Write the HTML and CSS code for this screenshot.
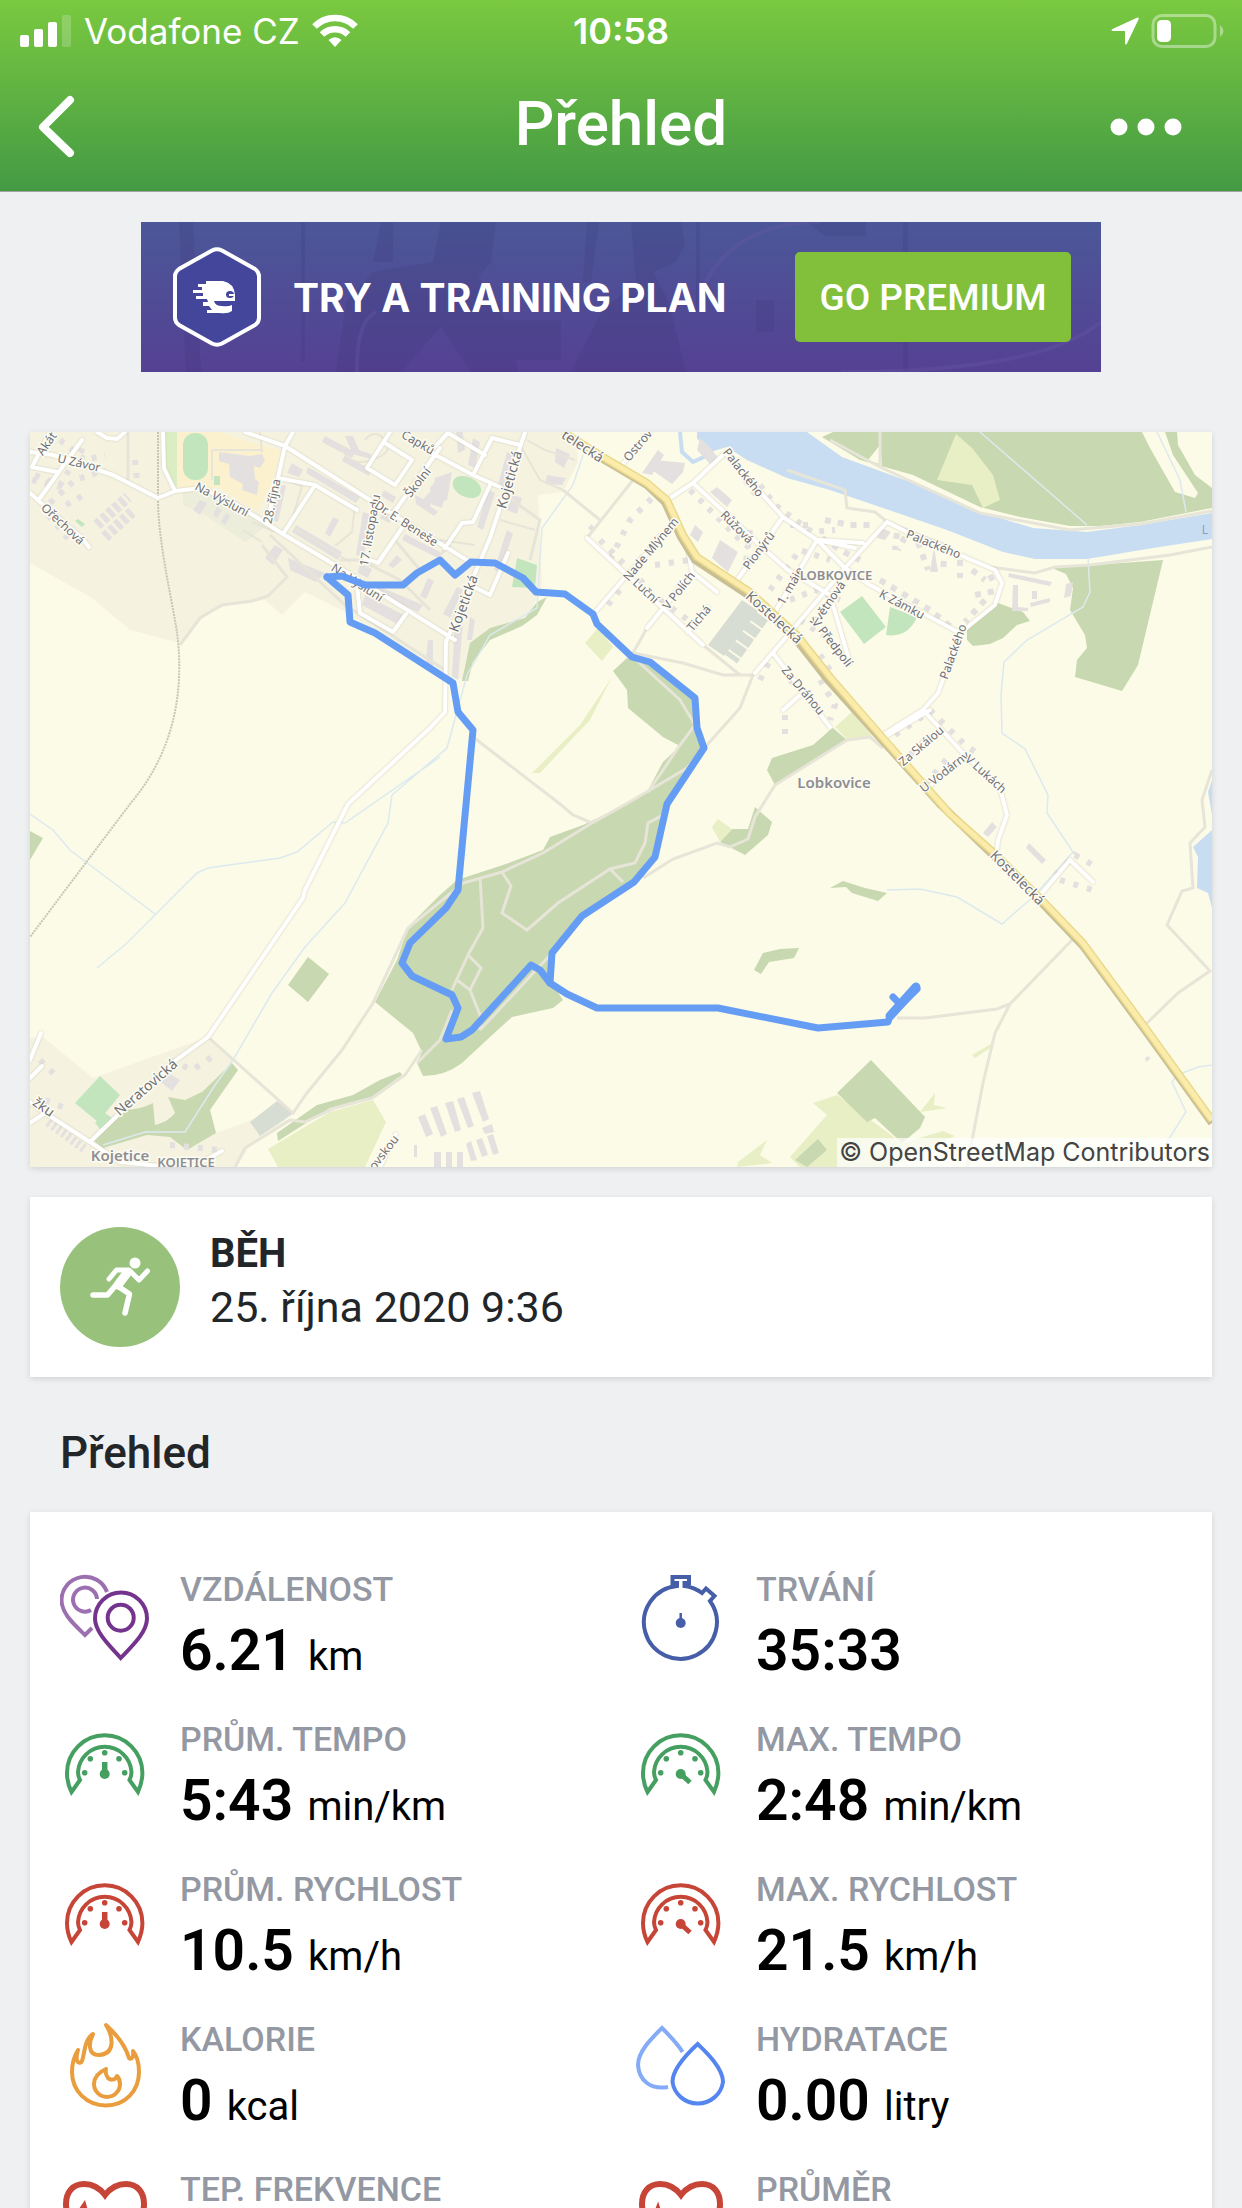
FILE: index.html
```
<!DOCTYPE html>
<html lang="cs">

<head>
    <meta charset="utf-8">
    <meta name="viewport" content="width=device-width, initial-scale=1">
    <title>Přehled</title>
    <link rel="stylesheet" href="styles.css">
</head>

<body>
    <!-- shared icons -->
    <svg class="sprite" width="0" height="0">
        <symbol id="gauge" viewBox="0 0 90 90">
            <path d="M11.5 70C8 63 7 57 7 51A37.7 37.7 0 0 1 82.4 51C82.4 57 81 63 78 70L69.5 58C71 55 71.5 53 71.5 50A26.8 26.8 0 0 0 18 50C18 54 18.5 55 20 58Z" fill="none" stroke="currentColor" stroke-width="4"/>
            <g fill="currentColor">
                <circle cx="24.7" cy="50.7" r="2.8"/><circle cx="30.3" cy="36.7" r="2.8"/><circle cx="44.7" cy="30.7" r="2.8"/>
                <circle cx="59" cy="36.7" r="2.8"/><circle cx="64.7" cy="50.7" r="2.8"/><circle cx="44.7" cy="52" r="5"/>
            </g>
        </symbol>
        <symbol id="heart" viewBox="0 0 90 90">
            <path d="M45 23C38 14 31 12 24 12C13 12 6 20 6 32C6 54 26 70 45 84C64 70 84 54 84 32C84 20 77 12 66 12C59 12 52 14 45 23Z" fill="none" stroke="currentColor" stroke-width="6"/>
        </symbol>
    </svg>

    <div class="app">
        <header class="header">
            <div class="status-bar">
                <div class="carrier">
                    <svg width="52" height="34" viewBox="0 0 52 34" fill="#fff">
                        <rect x="0" y="21" width="9" height="12" rx="2"/><rect x="14" y="15" width="9" height="18" rx="2"/>
                        <rect x="28" y="8" width="9" height="25" rx="2"/><rect x="42" y="1" width="9" height="32" rx="2" opacity=".2"/>
                    </svg>
                    <span>Vodafone CZ</span>
                    <svg width="46" height="34" viewBox="0 0 46 34" fill="none" stroke="#fff" stroke-width="6.5">
                        <path d="M2.500 12.500A29 29 0 0 1 43.500 12.500"/><path d="M10 20.500A18.500 18.500 0 0 1 36 20.500"/>
                        <path d="M23 33L16.500 26Q23 20.500 29.500 26Z" fill="#fff" stroke="none"/>
                    </svg>
                </div>
                <span class="clock">10:58</span>
                <div class="power">
                    <svg width="30" height="30" viewBox="0 0 30 30" fill="#fff"><path d="M27.500 1.500Q29.500 1 28.500 3.500L17 27.500Q15.500 30 15 27V15H3.500Q0 15 2.500 13Z"/></svg>
                    <svg width="76" height="36" viewBox="0 0 76 36">
                        <rect x="3" y="2.500" width="62" height="31" rx="9" fill="none" stroke="#fff" stroke-width="3" opacity=".4"/>
                        <rect x="7" y="7" width="14" height="22" rx="4.500" fill="#fff"/>
                        <path d="M70 12Q77 18 70 24Z" fill="#fff" opacity=".4"/>
                    </svg>
                </div>
            </div>
            <nav class="nav-bar">
                <button class="nav-button" type="button" aria-label="Zpět">
                    <svg width="42" height="66" viewBox="0 0 42 66"><path d="M34 6L7 33L34 59" fill="none" stroke="#fff" stroke-width="8" stroke-linecap="round" stroke-linejoin="round"/></svg>
                </button>
                <h1 class="title">Přehled</h1>
                <button class="nav-button more" type="button" aria-label="Více">
                    <svg width="72" height="18" viewBox="0 0 72 18" fill="#fff"><circle cx="9" cy="9" r="8.500"/><circle cx="36" cy="9" r="8.500"/><circle cx="63" cy="9" r="8.500"/></svg>
                </button>
            </nav>
        </header>

        <main class="content">
            <section class="banner">
                <svg class="banner-bg" viewBox="0 0 960 150" preserveAspectRatio="none">
                    <g fill="#37326f" opacity=".16">
                        <path d="M300 0H355L350 40L337 55L360 85L378 150H330L300 105L260 150H195L205 80L232 50L292 40Z"/>
                        <path d="M490 0H540L544 22L535 40L512 50L528 80L545 150H430L460 90L495 60Z"/>
                        <path d="M365 98h55v40h-55zM38 0h14l8 150H45zM665 0h60v14h-40zM615 78h18v32h-18zM160 0h4v140h-4zM240 0h12v40h-20zM446 0h12l-8 60h-8zM762 0h5v150h-5zM555 0h4v90h-4z"/>
                    </g>
                    <path d="M235 90Q215 100 216 150M560 70Q590 0 680 0M700 150Q900 150 960 100" fill="none" stroke="#6a5aa8" stroke-width="4" opacity=".3"/>
                </svg>
                <svg class="banner-logo" width="92" height="102" viewBox="0 0 92 102">
                    <path d="M41 4.500Q46 2 51 4.500L84 23Q88 26 88 30V72Q88 76 84 79L51 97.500Q46 100 41 97.500L8 79Q4 76 4 72V30Q4 26 8 23Z" fill="#43469a" stroke="#fff" stroke-width="4"/>
                    <path d="M32 35H52Q63 37 64 49V55H43Q44 60 51 60Q57 61 61 59V65Q57 68 49 67H36V64H41L38 60H32V56H37L36 53H25V50H32V47H22V44H31V41H27V38H35V35Z" fill="#fff"/>
                    <ellipse cx="59" cy="48.500" rx="4" ry="3.500" fill="#43469a"/><path d="M58 49h6" stroke="#fff" stroke-width="2"/>
                </svg>
                <span class="banner-text">TRY A TRAINING PLAN</span>
                <button class="premium" type="button">GO PREMIUM</button>
            </section>

            <section class="card map">
                <svg viewBox="30 432 1182 735" role="img" aria-label="Mapa trasy">
                    <g fill="#f5f3e0">
                        <path d="M30 432H563L577 445L578 462L563 492L538 495L542 585L527 622L490 628L470 645L468 680L450 678L433 665L345 612L305 592L282 615L265 600L223 605L202 618L180 643L130 630L92 598L30 563Z"/>
                        <path d="M30 1038L43 1037L93 1078L208 1037L233 1060L210 1110L216 1133L260 1117L293 1120L250 1145L237 1167H30Z"/>
                    </g>
                    <path d="M183 488L205 490L268 525L245 542L205 515L183 505Z" fill="#ecedda"/>
                    <path d="M177 432H220L237 438L280 450L273 482L257 512L220 488L177 487Z" fill="#fcf1ce"/>
                    <path d="M165 432H177V486H172L165 465Z" fill="#dbedc3"/>
                    <g fill="#c2e5be">
                        <rect x="183" y="433" width="25" height="47" rx="12"/><ellipse cx="467" cy="487" rx="15" ry="10" transform="rotate(25 467 487)"/>
                        <path d="M862 596L886 627L864 644L840 612ZM890 607L917 617Q908 638 886 635ZM517 558L537 565L535 588L512 587ZM100 1076L120 1095L98 1122L75 1103ZM105 1113L112 1118L100 1129L95 1123ZM214 476h6v9h-6zM78 519l7 5-3 3-7-6z"/>
                    </g>

                    <!-- forest and grass -->
                    <g fill="#c8d8b0">
                        <path d="M822 437L833 432H1212V508L1140 522L1100 526H1070L1020 517L980 507L913 475L860 460Z"/>
                        <path d="M1052 568L1163 560L1138 665L1122 691L1075 677L1077 660L1087 648L1085 635L1070 610L1073 588L1066 574Z"/>
                        <path d="M998 603L1023 612L1030 621L1017 625L1003 638L990 644L973 646L967 640V628Z"/>
                        <path d="M547 597L537 615L522 626L490 640L473 662L468 681H462L470 643L490 628L525 618L537 602Z"/>
                        <path d="M627 658L650 663L695 698L698 728L705 748L667 804L655 857L633 882L582 915L552 953L550 980L563 1000L553 1008L512 1017L490 1037L462 1063Q445 1076 423 1076L417 1063L422 1052L413 1033L375 1002L397 960L408 927L440 895L457 880L503 865L543 850L550 837L583 825L630 803L647 792L663 762L680 746L663 737L628 708L627 690L613 671Z"/>
                        <path d="M830 730L813 745L772 758L767 770L775 785L820 758L847 740L833 728ZM755 807L772 822L768 835L745 855L720 842L732 829H748ZM843 881L865 888L887 893L878 901L852 893L846 887L830 888ZM763 953L780 949L799 948L794 958L769 962L761 974L754 970ZM30 831L43 838L30 860ZM308 957L329 974L308 1002L288 985Z"/>
                        <path d="M232 1063L238 1070L210 1110L216 1133L187 1150L170 1137L147 1135L103 1148L93 1140L123 1110Q140 1110 153 1103L155 1125Q168 1122 175 1113L168 1097L185 1100L202 1092ZM277 1133L317 1105L353 1095L380 1080L400 1072L402 1075L370 1098L330 1108L278 1141Z"/>
                    </g>
                    <g fill="#e8efc5">
                        <path d="M956 434L972 448L993 475L1000 500L983 508L972 485L937 480ZM598 628L613 647L602 661L585 643ZM852 712L873 737L847 739L835 727ZM718 819L732 829L720 842L712 827ZM373 1100L386 1122L365 1167H278L268 1149L330 1112ZM813 1103L837 1095L902 1143L943 1131L955 1136L890 1167H800L790 1157L827 1115ZM767 1140L760 1155L772 1163L737 1167L738 1162ZM612 677L580 725L532 773H540L590 720ZM991 1044L972 1055L975 1058L990 1048ZM935 1093L920 1112L947 1108L934 1105Z"/>
                    </g>
                    <path d="M871 1060L925 1117L920 1128L902 1143L875 1118L867 1122L837 1093ZM818 1139L827 1150L807 1167L795 1160Z" fill="#c8d8b0"/>
                    <path d="M1142 432H1165L1173 455L1198 493L1195 498L1175 492L1150 448ZM1177 432L1178 445L1195 475L1212 488V432ZM880 445L868 460L882 465Z" fill="#fcfbe7"/>
                    <path d="M742 600L758 611L724 656L708 645ZM277 1101L294 1113L260 1136L250 1122Z" fill="#d7ddd3"/>
                    <path d="M762 616L731 659" fill="none" stroke="#d7ddd3" stroke-width="15" stroke-dasharray="10 2"/>

                    <!-- water -->
                    <path d="M697 432H807L842 457L913 483L980 512L1033 528L1087 532L1140 525L1212 513V539L1153 548L1087 559H1035L1003 552L947 530L883 508L830 490L787 478L747 460L727 447L707 453L697 438ZM1212 830L1193 847L1198 857L1197 888L1208 893L1212 908ZM1212 780L1208 792L1212 815Z" fill="#c8ddf2"/>
                    <path d="M680 432L682 452L693 462L706 456" fill="none" stroke="#c8ddf2" stroke-width="4"/>
                    <g fill="none" stroke="#dceaef" stroke-width="1.500">
                        <path d="M1088 558L1090 592L1083 607L1027 640L1004 662L1001 695L1002 733L1025 749L1048 795L1047 813L1073 852L1033 897L1002 924L957 897L920 889L887 890M980 432L1087 525M1157 432L1180 480L1186 512"/>
                        <path d="M30 814L53 830L70 850L155 914M97 968L127 943L197 873L208 868L280 858L297 852L333 822L345 823L440 757M392 795L388 823L345 903L305 947L272 993L233 1060L215 1085L185 1132H145L103 1145M583 455L573 485L542 528L537 608L490 635L467 675L447 748L392 795M1180 1074L1198 1067L1212 1065M1178 1074L1172 1082L1186 1112L1165 1145"/>
                    </g>

                    <!-- buildings -->
                    <g fill="#e3e0df">
                        <path d="M219 452L250 456L262 454L265 460L260 468L254 466L255 479L259 482L257 495L242 490L243 484L230 477L229 464L219 461ZM230 468L248 470L247 478L232 476ZM288 558L325 573L316 582L290 570ZM275 545L283 550L273 565L265 558ZM292 463L303 470L299 477L287 473ZM308 467L360 497L356 503L306 473ZM296 525L342 552L338 560L292 532ZM333 517L339 520L330 537L325 533ZM278 484L286 486L278 522L271 520ZM363 512L370 514L364 557L356 555ZM365 595L404 615L397 624L362 605ZM371 583L423 605L418 612L368 590ZM405 534L440 552V559L402 540ZM397 555L402 560L393 568L388 565ZM433 640V668H425L428 640ZM200 500L207 503L200 515L193 510ZM217 507L222 510L217 518L213 515ZM226 513L230 516L225 525L221 522Z"/>
                        <path d="M435 478L452 472L447 500L432 505ZM473 438L480 442L475 468L468 465ZM458 453L465 450L462 428L456 430ZM513 495L522 498L517 514L507 510ZM488 490L495 493L483 530L477 527ZM507 452L514 454L505 490L497 488ZM457 587L463 590L450 618L443 614ZM507 530L513 534L500 572L494 570ZM547 475L566 478L562 485L545 484ZM556 448L570 454L564 468L555 462ZM642 473L658 450L664 455L652 475ZM655 460L685 463L683 472L672 484L652 470ZM695 525L703 532L698 542L690 535ZM720 540L738 552L728 572L712 558ZM717 487L732 500L727 507L710 492ZM1009 573L1052 582L1050 586L1008 577ZM1013 585H1018V607L1028 608V611H1012ZM1030 603L1050 598V602L1031 607ZM1066 584L1073 582L1071 596L1064 598ZM1032 591h5v8h-5zM882 528L891 532L885 540L877 538ZM934 547L930 572H938M697 450L700 438L708 445L720 460L712 466ZM1029 843L1046 860L1042 864L1026 848ZM992 822L997 827L988 837L983 833ZM170 1074L180 1080L172 1091L161 1082ZM455 618L463 622L458 680L452 676ZM470 617L475 620L472 640L467 640Z"/>
                        <path d="M418 1117L425 1114L433 1134L426 1137ZM430 1108L437 1106L447 1134L441 1137ZM445 1103L453 1101L461 1130L455 1132ZM457 1099L464 1097L474 1126L468 1128ZM472 1093L480 1091L489 1119L483 1122ZM482 1128L492 1124L494 1132L485 1134ZM487 1136L493 1134L499 1153L493 1155ZM476 1140L482 1138L488 1155L482 1157ZM466 1144L471 1141L477 1160L471 1161ZM434 1152h7v15h-7zM446 1152h6v15h-6zM457 1152h6v15h-6zM414 1145h3v12h-3zM1145 1058l4-2 1 3-4 3z"/>
                        <path d="M325 436L355 452L352 458L322 442ZM345 455L372 470L369 476L342 461ZM345 436h8l6 14 12 4v5l-18-5zM415 495l8 4 8-8 5 3-6 12 8 6-4 4-18-12zM385 510l8 5-4 8-9-5zM428 578l6 3-8 18-6-3zM360 563l12 6-4 9-10-5zM384 490l12 7-3 6-12-7zM430 488l8-10 10 6-6 24-10-4z"/>
                    </g>
                    <g fill="none" stroke="#e3e0df" stroke-width="6">
                        <path d="M97 525L128 497M105 537L132 512" stroke-width="11" stroke-dasharray="5 3"/>
                        <path d="M48 1122L86 1150" stroke-width="9" stroke-dasharray="3 3"/>
                        <path d="M35 475L60 485L85 445M50 503L75 480L105 470M48 515L72 543M60 440L85 460L105 455M32 480L60 487M66 505L84 495M135 460L137 480" stroke-dasharray="5 8"/>
                        <path d="M600 540L625 565L645 585M610 560L630 520L655 495M640 560L665 530M660 600L688 620L700 635M590 530L600 520M608 605L620 590M655 565L690 560" stroke-dasharray="5 9"/>
                        <path d="M690 490L740 540L765 560M760 485L775 505L812 532L835 530M745 480L760 500M770 590L800 550L830 560M790 600L815 590L840 600M750 530L745 570M800 620L830 640L850 665M790 525L815 525M820 655L830 670" stroke-dasharray="5 8"/>
                        <path d="M897 533L895 550M905 537L898 550M918 542L928 570M945 548L943 570M960 560V578M972 570L985 580M990 575L995 585M985 600L965 622M880 580L930 610L955 630M825 520L850 525L870 525M822 538L840 550L860 560M975 595L1000 590" stroke-dasharray="6 7"/>
                        <path d="M760 680L770 660M790 680L820 710M785 715V735M820 680L835 705L830 720M895 735L925 715M930 710L965 745L980 755M900 765L930 735M925 785L950 755M1055 875L1075 855L1093 865M1060 880L1093 890M40 1060L55 1075M45 1100L70 1110M170 1060L192 1070L215 1055M170 1145L220 1150" stroke-dasharray="5 9"/>
                    </g>

                    <!-- paths -->
                    <g fill="none" stroke="#e7e4d8" stroke-width="3">
                        <path d="M180 645L200 618L222 605L252 601L268 596L287 577L262 545M128 432V480M473 737L560 804L573 815L592 823L633 800L687 768L707 745L740 708L753 675H723L683 663L633 653L647 628M592 823L543 853L502 872L463 883L408 928L373 1003L342 1050L307 1093L293 1113L208 1037"/>
                        <path d="M480 877L483 928L468 955L452 990M468 955L481 968L470 990L457 980M470 990L480 1015V1030M502 872L511 886L502 913L527 930L558 903L610 869L635 863L645 843L648 823L663 815M610 869L623 882M552 953L480 1030M417 1063L440 1040L452 1010M633 657L680 700L695 725L680 745L648 792"/>
                        <path d="M643 878L673 859L717 843L730 847L748 839L755 817L775 785L847 740L870 737L883 748M897 1018L925 1018L997 1009L1010 1004L1072 940M1010 1004L995 1033L983 1083L967 1167M1145 1025L1178 993L1210 971L1167 925L1182 891L1193 888L1190 843L1205 827L1202 800L1212 770M235 1167L245 1148L290 1120L305 1122L335 1108L372 1098L405 1075L422 1050M587 538L633 480M563 490L600 520M703 645L740 675"/>
                        <path d="M830 440L880 467L980 513L1070 530L1140 524L1212 511M787 470L845 490L847 508L875 512L887 522L950 547M990 567L1035 573L1055 567L1090 565L1170 555L1212 547M880 432V467M440 555L450 545M512 500L540 520L530 560M270 535L345 605L445 670M340 560L360 560L400 580L430 610M395 540L420 570"/>
                        <path d="M212 450H262M212 450V480M260 432L262 452M355 505L352 532L335 546M295 528L350 562M292 520L302 486L290 482M520 445L540 480L563 490M527 440L545 450L575 460M500 520L535 530M475 545L440 540M243 530L262 542M252 522L275 532M365 440Q375 428 385 440T372 460T340 445" stroke-width="2"/>
                    </g>
                    <path id="rail" d="M158 432V498C158 540 170 590 177 632C183 680 180 745 130 804L30 937" fill="none" stroke="#c7c5b8" stroke-width="2" stroke-dasharray="2 1"/>

                    <!-- streets -->
                    <g class="street">
                        <path id="streets" d="M30 452L53 455L113 475L158 498L175 491L202 488L237 505L283 534L340 568L455 640M245 432L285 446L370 500L470 562M293 432L285 446L277 482L267 522M278 478L315 485L357 510M315 485L283 534M163 432L164 468L175 491M30 493L40 502L82 538L89 547M40 498L82 440M32 467L57 472M32 467L50 432M97 432L107 438L117 439L125 432M440 448L392 515M402 528L378 563L365 558M390 432L367 468L395 485L412 460L385 443M525 432L490 538L453 625L446 642L445 712L430 728L348 804L305 890L303 898L208 1037L172 1063L90 1142L45 1113L30 1102M430 452L473 475L500 487M448 433L485 455M492 438L473 475M492 438L520 445M490 485L473 522L462 523L445 548M508 553L490 595L470 585M357 585L360 613L393 632L406 614M30 1060L41 1033M30 1078L42 1066M90 1142L120 1162L160 1166M200 1163L222 1151M380 1167L396 1134M45 1113L30 1123M430 452L448 433"/>
                        <path d="M667 500L693 483L725 453L783 517L817 540L855 548M693 483L763 548L788 570L830 595L850 663M783 517L737 580M817 540L775 612M913 535L887 522L845 568L788 635L755 673M887 522L913 535L995 570L1002 583L995 605L960 633L938 693L923 710L883 735M817 540L845 568L870 585L958 632M923 710L963 753L1000 788L1007 815L998 840L997 850M820 540L863 543M773 653L830 727M800 695L783 710M587 538L703 645M627 575L597 610M627 575L673 525M622 465L650 432M688 548L692 572L717 592M690 575L647 628M708 607L688 632M1042 893L1070 860L1093 882M883 738L930 710M925 790L965 757"/>
                    </g>
                    <g fill="none" stroke-linejoin="round">
                        <path d="M563 434L603 459L647 485L665 502L681 537L695 560L748 595L795 638L828 680L883 741L940 804L993 855L1040 901L1083 946L1147 1033L1212 1123" stroke="#c9bf94" stroke-width="8"/>
                        <path d="M563 432L603 457L647 483L667 500L683 535L697 557L750 592L797 635L830 677L883 738L950 814L993 852L1040 898L1083 943L1147 1030L1212 1120" stroke="#e9d98c" stroke-width="8"/>
                        <path d="M563 432L603 457L647 483L667 500L683 535L697 557L750 592L797 635L830 677L883 738L950 814L993 852L1040 898L1083 943L1147 1030L1212 1120" stroke="#fbecab" stroke-width="5"/>
                    </g>

                    <g class="place">
                        <text transform="translate(78 467) rotate(13)">U Závor</text>
                        <text transform="translate(60 527) rotate(43)">Ořechová</text>
                        <text transform="translate(50 446) rotate(-55)">Akát</text>
                        <text transform="translate(220 503) rotate(28)">Na Výsluní</text>
                        <text transform="translate(276 502) rotate(-78)">28. října</text>
                        <text transform="translate(374 531) rotate(-80)">17. listopadu</text>
                        <text transform="translate(404 527) rotate(33)">Dr. E. Beneše</text>
                        <text transform="translate(421 485) rotate(-52)">Školní</text>
                        <text transform="translate(416 446) rotate(30)">Čapků</text>
                        <text transform="translate(355 586) rotate(33)">Na Výsluní</text>
                        <text transform="translate(641 448) rotate(-50)">Ostrov</text>
                        <text transform="translate(740 475) rotate(52)">Palackého</text>
                        <text transform="translate(654 552) rotate(-50)">Nade Mlýnem</text>
                        <text transform="translate(734 530) rotate(45)">Růžová</text>
                        <text transform="translate(762 553) rotate(-53)">Pionýrů</text>
                        <text transform="translate(643 594) rotate(43)">Luční</text>
                        <text transform="translate(682 593) rotate(-52)">V Polích</text>
                        <text transform="translate(702 621) rotate(-50)">Tichá</text>
                        <text transform="translate(794 588) rotate(-60)">1. máje</text>
                        <text transform="translate(831 606) rotate(-55)">Květnová</text>
                        <text transform="translate(829 645) rotate(52)">V Předpolí</text>
                        <text transform="translate(800 693) rotate(50)">Za Dráhou</text>
                        <text transform="translate(932 548) rotate(22)">Palackého</text>
                        <text transform="translate(900 608) rotate(28)">K Zámku</text>
                        <text transform="translate(957 653) rotate(-70)">Palackého</text>
                        <text transform="translate(924 749) rotate(-40)">Za Skálou</text>
                        <text transform="translate(947 775) rotate(-38)">U Vodárny</text>
                        <text transform="translate(983 777) rotate(42)">V Lukách</text>
                        <text transform="translate(387 1155) rotate(-52)">ovskou</text>
                    </g>
                    <g class="place main-street">
                        <text transform="translate(514 481) rotate(-74)">Kojetická</text>
                        <text transform="translate(468 605) rotate(-70)">Kojetická</text>
                        <text transform="translate(580 450) rotate(33)">telecká</text>
                        <text transform="translate(771 621) rotate(42)">Kostelecká</text>
                        <text transform="translate(1014 881) rotate(45)">Kostelecká</text>
                        <text transform="translate(149 1091) rotate(-41)">Neratovická</text>
                        <text transform="translate(41 1111) rotate(35)">žku</text>
                    </g>
                    <g class="place village">
                        <text class="small" x="836" y="580">LOBKOVICE</text>
                        <text x="834" y="788">Lobkovice</text>
                        <text x="120" y="1161">Kojetice</text>
                        <text class="small" x="186" y="1167">KOJETICE</text>
                    </g>
                    <text class="river" x="1205" y="534">L</text>

                    <!-- recorded route -->
                    <g fill="none" stroke="#659df4" stroke-width="7" stroke-linecap="round" stroke-linejoin="round">
                        <path d="M327 577L342 576L365 585H403L417 573L440 560L455 575L471 562L495 563L523 578L536 592L565 594L593 614L597 624L632 657L650 662L695 698L697 728L704 748L667 804L655 857L634 882L582 916L552 953L550 983"/>
                        <path d="M327 577L348 595L350 622L375 633L453 683L458 712L473 730L458 890L446 908L410 943L402 963L412 976L452 995L458 1008L446 1039L461 1037L472 1030L531 965L540 970L550 983L567 994L597 1008H718L818 1028L888 1022L890 1016L917 989M893 997L899 1003"/>
                        <path d="M890 1016L916 987" stroke-width="9"/>
                    </g>
                </svg>
                <span class="attribution">© OpenStreetMap Contributors</span>
            </section>

            <section class="card activity">
                <svg width="120" height="120" viewBox="0 0 120 120">
                    <circle cx="60" cy="60" r="60" fill="#98c27c"/>
                    <circle cx="75" cy="36" r="5.500" fill="#fff"/>
                    <g fill="none" stroke="#fff" stroke-linecap="round" stroke-linejoin="round">
                        <path d="M49 52L56.500 43H69L79 53L87.500 44" stroke-width="5"/>
                        <path d="M33 68H47.500L56 58L69.500 67L65 86" stroke-width="5.500"/>
                        <path d="M67 46L58 58" stroke-width="9"/>
                    </g>
                </svg>
                <div>
                    <div class="activity-type">BĚH</div>
                    <div class="activity-date">25. října 2020 9:36</div>
                </div>
            </section>

            <h2 class="section-title">Přehled</h2>

            <section class="card stats">
                <div class="stat">
                    <svg class="icon" viewBox="0 0 90 90" fill="none" stroke="#74348e" stroke-width="4">
                        <path d="M60.700 86C52 76 35 61 35 46.500A26 26 0 0 1 87 46.500C87 61 70 76 60.700 86Z"/><circle cx="60.700" cy="45.700" r="13"/>
                        <path d="M47 20A23.500 23.500 0 0 0 1.500 28C1.500 42 15 53 25 63L32 56M37 27A12 12 0 1 0 31 38" stroke="#9b6fb0"/>
                    </svg>
                    <div>
                        <div class="label">VZDÁLENOST</div>
                        <div class="value">6.21 <span class="unit">km</span></div>
                    </div>
                </div>
                <div class="stat">
                    <svg class="icon" viewBox="0 0 90 90" fill="none" stroke="#465ea8" stroke-width="4">
                        <path d="M41 14V11H36.500V5H53V11H48.500V14A37 37 0 0 1 66 21L70 16.500L78.500 24L74 29A36.500 36.500 0 1 1 41 14Z"/>
                        <path d="M44.700 51V41" stroke-width="2.500"/><circle cx="44.700" cy="51" r="5" fill="#465ea8" stroke="none"/>
                    </svg>
                    <div>
                        <div class="label">TRVÁNÍ</div>
                        <div class="value">35:33</div>
                    </div>
                </div>
                <div class="stat">
                    <svg class="icon green" viewBox="0 0 90 90"><use href="#gauge"/><path d="M44.700 52V40" stroke="currentColor" stroke-width="5.500"/></svg>
                    <div>
                        <div class="label">PRŮM. TEMPO</div>
                        <div class="value">5:43 <span class="unit">min/km</span></div>
                    </div>
                </div>
                <div class="stat">
                    <svg class="icon green" viewBox="0 0 90 90"><use href="#gauge"/><path d="M44.700 52L54 60.500" stroke="currentColor" stroke-width="5"/></svg>
                    <div>
                        <div class="label">MAX. TEMPO</div>
                        <div class="value">2:48 <span class="unit">min/km</span></div>
                    </div>
                </div>
                <div class="stat">
                    <svg class="icon red" viewBox="0 0 90 90"><use href="#gauge"/><path d="M44.700 52V40" stroke="currentColor" stroke-width="5.500"/></svg>
                    <div>
                        <div class="label">PRŮM. RYCHLOST</div>
                        <div class="value">10.5 <span class="unit">km/h</span></div>
                    </div>
                </div>
                <div class="stat">
                    <svg class="icon red" viewBox="0 0 90 90"><use href="#gauge"/><path d="M44.700 52L54 60.500" stroke="currentColor" stroke-width="5"/></svg>
                    <div>
                        <div class="label">MAX. RYCHLOST</div>
                        <div class="value">21.5 <span class="unit">km/h</span></div>
                    </div>
                </div>
                <div class="stat">
                    <svg class="icon" viewBox="0 0 90 90" fill="none" stroke="#e99d3c" stroke-width="4" stroke-linejoin="round">
                        <path d="M46 3C53 14 56 32 39 33C27 33 29 20 33 12C24 18 25 31 22 39C20 43 14 41 18 28C13 36 12 42 12 50C12 69 27 83.500 46 83.500C65 83.500 79 69 79 50C79 41 77 34 73 29C74 36 71 38 69 36C65 22 56 12 46 3Z"/>
                        <path d="M46 47C37 51 34 56 34 62A13 13 0 0 0 60 62C60 59 59 56 57 54C55 59 50 58 48 56C46 53 45 50 46 47Z"/>
                    </svg>
                    <div>
                        <div class="label">KALORIE</div>
                        <div class="value">0 <span class="unit">kcal</span></div>
                    </div>
                </div>
                <div class="stat">
                    <svg class="icon" viewBox="0 0 90 90" fill="none" stroke="#5585ee" stroke-width="4">
                        <path d="M61.700 22C70 30 87 46 87 60A25.500 25 0 0 1 36.500 60C36.500 46 53 30 61.700 22Z"/>
                        <path d="M46.500 30C42 22 34 14 26 6C17 15 2 29 2 43C3 58 14 68 32 65" stroke="#85abf7"/>
                    </svg>
                    <div>
                        <div class="label">HYDRATACE</div>
                        <div class="value">0.00 <span class="unit">litry</span></div>
                    </div>
                </div>
                <div class="stat">
                    <svg class="icon red" viewBox="0 0 90 90"><use href="#heart"/><path d="M10 50L25 28L34 60" fill="currentColor"/></svg>
                    <div class="label">TEP. FREKVENCE</div>
                </div>
                <div class="stat">
                    <svg class="icon red" viewBox="0 0 90 90"><use href="#heart"/><path d="M14 55L22 34L30 60" fill="none" stroke="currentColor" stroke-width="3"/></svg>
                    <div class="label">PRŮMĚR</div>
                </div>
            </section>
        </main>
    </div>
</body>

</html>
```
FILE: styles.css
```
body {
    margin: 0;
    background-color: #eff0f2;
    font-family: Roboto, "Liberation Sans", sans-serif;
    color: #222629;
}

svg {
    display: block;
    flex-shrink: 0;
}

button {
    border: none;
    padding: 0;
    background: none;
    font-family: inherit;
}

.sprite {
    position: absolute;
}

.app {
    height: 100vh;
    overflow: hidden;
}

.header {
    background: linear-gradient(#7ac940, #449a44);
    border-bottom: 1px solid #a3a3a3;
    color: white;
}

.status-bar {
    display: grid;
    grid-template-columns: 1fr auto 1fr;
    align-items: center;
    height: 62px;
    padding: 0 16px;
    font: 35px/62px Inter, sans-serif;
}

.carrier {
    display: flex;
    align-items: center;
    gap: 12px;
    padding-left: 4px;
}

.clock {
    font-size: 36px;
    font-weight: 600;
}

.power {
    display: flex;
    align-items: center;
    justify-content: flex-end;
    gap: 10px;
}

.nav-bar {
    display: grid;
    grid-template-columns: 1fr auto 1fr;
    align-items: center;
    height: 129px;
    padding: 0 36px;
}

.nav-button {
    justify-self: start;
}

.nav-button.more {
    justify-self: end;
    margin-right: 24px;
}

.title {
    margin: 0;
    padding-bottom: 6px;
    font-size: 62px;
    font-weight: 500;
}

.content {
    padding: 30px;
}

.banner {
    position: relative;
    display: flex;
    align-items: center;
    box-sizing: border-box;
    max-width: 960px;
    height: 150px;
    margin: 0 auto 60px;
    padding: 0 30px;
    background: linear-gradient(#4b5798, #554193);
}

.banner-bg {
    position: absolute;
    inset: 0;
    width: 100%;
    height: 100%;
}

.banner-logo,
.banner-text,
.premium {
    position: relative;
}

.banner-text {
    margin-left: 30px;
    color: white;
    font: bold 39px Inter, sans-serif;
}

.premium {
    width: 276px;
    height: 90px;
    margin-left: auto;
    border-radius: 5px;
    background-color: #82bf3b;
    color: white;
    font-size: 37px;
    font-weight: 500;
}

.card {
    margin-bottom: 30px;
    background-color: white;
    box-shadow: 0 2px 6px rgba(0, 0, 0, 0.12);
}

.map {
    position: relative;
    background-color: #fcfbe7;
}

.map svg {
    width: 100%;
    height: auto;
}

.street path {
    fill: none;
    stroke: white;
    stroke-width: 4px;
    stroke-linejoin: round;
    stroke-linecap: round;
    filter: drop-shadow(0 0 1px #cfccba);
}

.place {
    font: 12px "Noto Sans", sans-serif;
    text-anchor: middle;
    fill: #707078;
    stroke: #fdfcf2;
    stroke-width: 3px;
    stroke-linejoin: round;
    paint-order: stroke;
}

.main-street {
    font-size: 14px;
}

.village {
    font-size: 15px;
    font-weight: 600;
    fill: #8e8e92;
}

.village .small {
    font-size: 13px;
}

.river {
    font: 12px "Noto Sans", sans-serif;
    text-anchor: middle;
    fill: #8fa0b5;
}

.attribution {
    position: absolute;
    right: 0;
    bottom: 0;
    padding: 0 2px;
    background-color: rgba(255, 255, 255, 0.7);
    color: #444;
    font: 25px/29px Inter, sans-serif;
}

.activity {
    display: flex;
    gap: 30px;
    padding: 30px;
}

.activity-type {
    font-size: 40px;
    line-height: 54px;
    font-weight: bold;
}

.activity-date {
    font-size: 43px;
    line-height: 52px;
}

.section-title {
    margin: 0;
    padding: 18px 30px 30px;
    font-size: 44px;
    line-height: 57px;
    font-weight: 500;
}

.stats {
    display: grid;
    grid-template-columns: 1fr 1fr;
    padding: 60px 0 60px 30px;
}

.stat {
    display: flex;
    gap: 30px;
    height: 150px;
}

.icon {
    width: 90px;
    height: 90px;
}

.green {
    color: #459f60;
}

.red {
    color: #c64537;
}

.label {
    color: #9398a3;
    font-size: 34px;
    line-height: 34px;
    font-weight: 500;
}

.value {
    color: black;
    font-size: 57px;
    line-height: 90px;
    font-weight: 600;
}

.unit {
    font-size: 40px;
    line-height: 40px;
    font-weight: normal;
}
```
